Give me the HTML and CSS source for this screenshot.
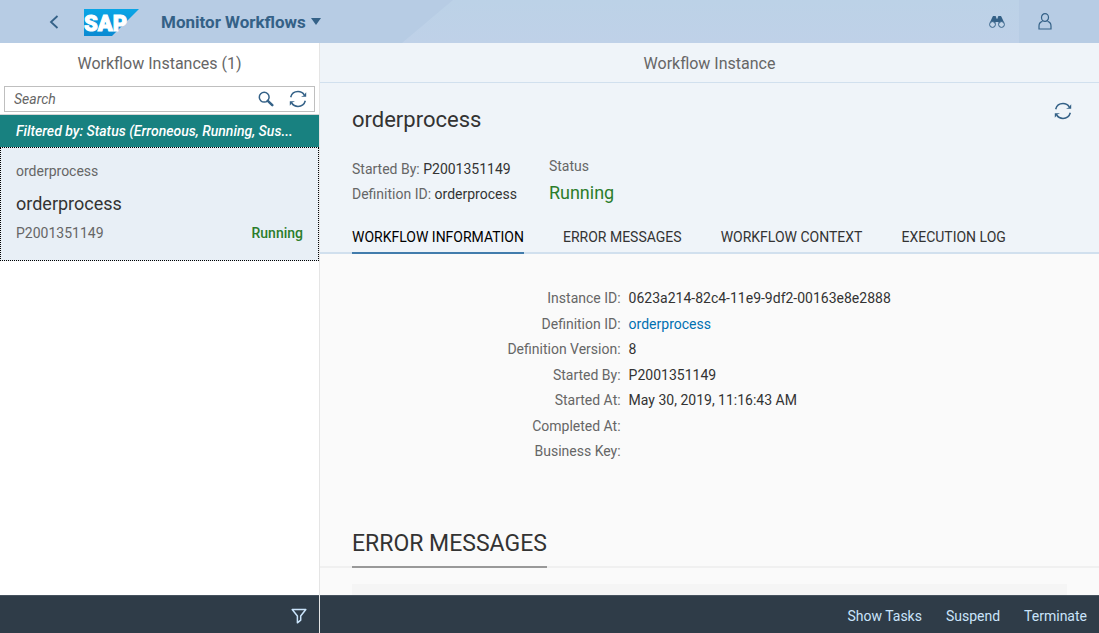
FILE: index.html
```html
<!DOCTYPE html>
<html lang="en">
<head>
<meta charset="utf-8">
<title>Monitor Workflows</title>
<link rel="stylesheet" href="styles.css">
</head>
<body>
<svg class="sprite" aria-hidden="true">
  <symbol id="refresh" viewBox="0 0 18 18">
    <path d="M1.700 7.200C2.600 3.800 5.500 1.600 9 1.600c2.700 0 5 1.300 6.300 3.400M16.300 10.800c-.9 3.400-3.800 5.600-7.300 5.600-2.700 0-5-1.300-6.300-3.400" fill="none" stroke="currentColor" stroke-width="1.500"/>
    <path d="M17.200 2.200v4.600h-5.200l2.600-1.400zM.8 15.800v-4.600H6l-2.600 1.400z" fill="currentColor"/>
  </symbol>
</svg>
<header class="shell">
  <button class="icon-button back" aria-label="Back"><svg width="10" height="14" viewBox="0 0 10 14"><path d="M8.500 1L2 7l6.500 6" fill="none" stroke="currentColor" stroke-width="1.800"/></svg></button>
  <a href="#" class="logo" aria-label="SAP home">
    <svg width="55" height="27" viewBox="0 0 55 27">
      <defs><linearGradient id="brand" x1="0" y1="0" x2="0" y2="1"><stop offset="0" stop-color="#0aa5e6"/><stop offset="1" stop-color="#0a8ad2"/></linearGradient></defs>
      <path d="M0 0h55L28 27H0z" fill="url(#brand)"/>
      <text x="0" y="22" class="logo-text">SAP</text>
    </svg>
  </a>
  <button class="app-title">Monitor Workflows<svg width="10" height="7" viewBox="0 0 10 7"><path d="M0 0h10L5 7z" fill="currentColor"/></svg></button>
  <div class="shell-actions">
    <button class="icon-button" aria-label="Search"><svg width="16" height="12" viewBox="0 0 16 12"><path d="M4 0h2.500l.7 1v1.500h1.600V1l.7-1H12l.8 1.500 2.500 5.500-5.500 2L9.500 6h-3l-.3 3L.7 7l2.500-5.500z" fill="currentColor"/><circle cx="3.500" cy="8.500" r="2.900" class="lens"/><circle cx="12.500" cy="8.500" r="2.900" class="lens"/></svg></button>
    <button class="icon-button" aria-label="User"><svg width="14" height="17" viewBox="0 0 14 17" fill="none" stroke="currentColor" stroke-width="1.200"><ellipse cx="7" cy="4.500" rx="3.500" ry="3.900"/><path d="M4.500 8.300C2.300 8.800 1 10.500 1 13v3h12v-3c0-2.500-1.300-4.200-3.500-4.700"/></svg></button>
  </div>
</header>
<div class="workspace">
  <aside class="master">
    <h1 class="page-title">Workflow Instances (1)</h1>
    <div class="search-bar">
      <form class="search" role="search">
        <input type="search" aria-label="Search" placeholder="Search">
        <button type="button" class="icon-button" aria-label="Find"><svg width="16" height="16" viewBox="0 0 16 16"><circle cx="6.200" cy="6.200" r="4.900" fill="none" stroke="currentColor" stroke-width="1.500"/><path d="M9.800 9.800l4.500 4.300" stroke="currentColor" stroke-width="2.500" stroke-linecap="round"/></svg></button>
        <button type="button" class="icon-button" aria-label="Refresh list"><svg width="18" height="18"><use href="#refresh"/></svg></button>
      </form>
    </div>
    <button class="filter-info">Filtered by: Status (Erroneous, Running, Sus...</button>
    <a href="#" class="item">
      <span class="item-intro">orderprocess</span>
      <span class="item-title">orderprocess</span>
      <span class="item-row"><span>P2001351149</span><span class="good">Running</span></span>
    </a>
    <footer class="bar master-bar">
      <button class="icon-button" aria-label="Filter"><svg width="16" height="16" viewBox="0 0 16 16"><path d="M1.200 1.500h13.600L9.700 8v4.200L6.400 14.800V8z" fill="none" stroke="currentColor" stroke-width="1.500" stroke-linejoin="round"/></svg></button>
    </footer>
  </aside>
  <main class="detail">
    <h2 class="page-title detail-title">Workflow Instance</h2>
    <section class="object-header">
      <div class="heading-row">
        <h3>orderprocess</h3>
        <button class="icon-button" aria-label="Refresh"><svg width="18" height="18"><use href="#refresh"/></svg></button>
      </div>
      <div class="facts">
        <div class="attributes">
          <div><span class="label">Started By:</span> P2001351149</div>
          <div><span class="label">Definition ID:</span> orderprocess</div>
        </div>
        <div class="status"><div class="label">Status</div><div class="status-value good">Running</div></div>
      </div>
      <nav class="tabs">
        <a href="#info" class="active">WORKFLOW INFORMATION</a>
        <a href="#errors">ERROR MESSAGES</a>
        <a href="#context">WORKFLOW CONTEXT</a>
        <a href="#log">EXECUTION LOG</a>
      </nav>
    </section>
    <div class="content">
      <dl class="info" id="info">
        <dt>Instance ID:</dt><dd>0623a214-82c4-11e9-9df2-00163e8e2888</dd>
        <dt>Definition ID:</dt><dd><a href="#">orderprocess</a></dd>
        <dt>Definition Version:</dt><dd>8</dd>
        <dt>Started By:</dt><dd>P2001351149</dd>
        <dt>Started At:</dt><dd>May 30, 2019, 11:16:43 AM</dd>
        <dt>Completed At:</dt><dd></dd>
        <dt>Business Key:</dt><dd></dd>
      </dl>
      <section id="errors">
        <div class="section-head"><h3>ERROR MESSAGES</h3></div>
        <div class="panel"></div>
      </section>
    </div>
    <footer class="bar">
      <button>Show Tasks</button>
      <button>Suspend</button>
      <button>Terminate</button>
    </footer>
  </main>
</div>
</body>
</html>
```
FILE: styles.css
```css
* { box-sizing: border-box; }
body {
  margin: 0;
  height: 100vh;
  display: flex;
  flex-direction: column;
  overflow: hidden;
  font: 14px/20px Roboto, "Liberation Sans", sans-serif;
  color: #333;
  background: #fff;
}
h1, h2, h3, dl, dd { margin: 0; font-weight: 400; }
button { font: inherit; color: inherit; background: none; border: 0; padding: 0; }
a { color: inherit; text-decoration: none; }
svg { display: block; }
.sprite { position: absolute; width: 0; height: 0; }
.icon-button { display: grid; place-items: center; color: #346187; }
.good { color: #2b7d2b; }
.label { color: #666; }

.shell {
  flex: none;
  height: 43px;
  position: relative;
  isolation: isolate;
  display: flex;
  align-items: center;
  padding: 0 46px;
  background: #b7cce4;
  color: #346187;
}
.shell::before {
  content: "";
  position: absolute;
  z-index: -1;
  inset: 0 80px 0 402px;
  background: linear-gradient(#bcd2e7, #bfd1e8);
  clip-path: polygon(51px 0, 100% 0, 100% 100%, 0 100%);
}
.back { width: 16px; height: 32px; }
.logo { margin: 2px 22px 0; }
.logo-text { font: 900 22px Roboto, sans-serif; fill: #fff; stroke: #fff; stroke-width: 1px; }
.app-title { display: flex; align-items: center; gap: 5px; font-size: 17px; font-weight: 700; }
.shell-actions { margin-left: auto; display: flex; gap: 32px; }
.shell-actions .icon-button { width: 16px; }
.lens { fill: #c4d6e9; stroke: currentColor; stroke-width: 1px; }

.workspace { flex: 1; min-height: 0; display: flex; }
.master { flex: none; width: 320px; display: flex; flex-direction: column; border-right: 1px solid #e5e5e5; }
.page-title { flex: none; height: 40px; font-size: 16px; line-height: 42px; text-align: center; color: #666; }
.search-bar { padding: 3px 4px 2px; border-bottom: 1px solid #d5d5d5; }
.search { display: flex; height: 26px; border: 1px solid #bfbfbf; }
.search input { flex: 1; min-width: 0; border: 0; outline: 0; padding: 0 9px; font: inherit; background: none; }
.search input::placeholder { color: #666; font-style: italic; }
.search .icon-button { width: 32px; }
.filter-info {
  flex: none;
  height: 32px;
  padding: 0 16px;
  background: #188180;
  color: #fff;
  font-style: italic;
  font-weight: 500;
  text-align: left;
  white-space: nowrap;
}
.item { display: flex; flex-direction: column; padding: 13px 15px 17px; border: 1px dotted #000; background: #e8eff6; color: #666; }
.item-title { margin: 11px 0 7px; font-size: 18px; line-height: 24px; color: #333; }
.item-row { display: flex; justify-content: space-between; }
.item-row .good { font-weight: 500; }

.bar {
  flex: none;
  height: 38px;
  margin-top: auto;
  padding: 3px 12px 0;
  display: flex;
  justify-content: flex-end;
  align-items: center;
  gap: 24px;
  background: #2f3c48;
  border-top: 1px solid #46525e;
  color: #cae4fb;
}
.bar .icon-button { color: #cae4fb; }

.detail { flex: 1; min-width: 0; display: flex; flex-direction: column; background: #fafafa; }
.detail-title { background: #eff4f9; border-bottom: 1px solid #d1e0ee; }
.object-header { flex: none; padding: 19px 0 0 32px; background: #eff4f9; border-bottom: 2px solid #d1e0ee; }
.heading-row { display: flex; justify-content: space-between; padding-right: 27px; }
.heading-row h3 { font-size: 22px; line-height: 36px; }
.heading-row .icon-button { height: 18px; }
.facts { display: flex; gap: 32px; padding-top: 19px; }
.attributes { line-height: 25px; }
.status .label { line-height: 18px; }
.status-value { margin-top: 6px; font-size: 18px; line-height: 24px; }
.tabs { display: flex; gap: 39px; margin: 15px 0 -2px; }
.tabs a { height: 32px; padding-top: 5px; }
.tabs .active { color: #000; border-bottom: 2px solid #427cac; }

.content { flex: 1; min-height: 0; overflow: hidden; }
.info {
  display: grid;
  grid-template-columns: 301fr 471fr;
  grid-template-rows: repeat(3, 26px 25px) 26px;
  column-gap: 8px;
  padding-top: 32px;
  line-height: 25px;
}
.info dt { text-align: right; color: #666; }
.info dd a { color: #0070b1; }
.section-head { margin-top: 59px; padding-left: 32px; border-bottom: 2px solid #f0f0f0; display: flex; }
.section-head h3 { font-size: 23px; line-height: 28px; padding: 6px 0 8px; margin-bottom: -2px; border-bottom: 2px solid #999; }
.panel { margin: 16px 32px 0; height: 48px; background: #f5f5f5; }
```
